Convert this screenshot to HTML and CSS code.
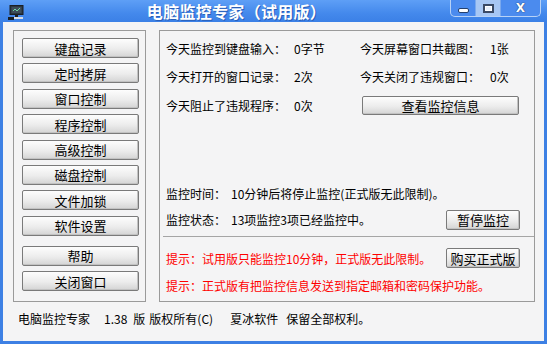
FILE: index.html
```html
<!DOCTYPE html>
<html>
<head>
    <title>电脑监控专家（试用版）</title>
    <link rel="stylesheet" href="styles.css">
</head>
<body>
    <div class="window">
        <div class="titlebar">
            <svg class="app-icon" width="16" height="15" viewBox="0 0 16 15">
                <rect x="2" y="0.5" width="13" height="9" fill="#2b3640" stroke="#1a1f24"/>
                <rect x="3.5" y="2" width="10" height="6" fill="#3d4d5a"/>
                <path d="M5 6 L7 4 L9 6 L12 3" stroke="#6fd3a0" stroke-width="1" fill="none"/>
                <rect x="7" y="10" width="3" height="2" fill="#1a1f24"/>
                <rect x="0" y="12" width="6" height="3" fill="#1a1f24"/>
                <rect x="6" y="12" width="9" height="2" fill="#d8dde4"/>
            </svg>
            <div class="title">电脑监控专家（试用版）</div>
            <div class="caption-buttons">
                <div class="cap-btn cap-min"><span class="min-bar"></span></div>
                <div class="cap-btn cap-max"><span class="max-box"></span></div>
                <div class="cap-btn cap-close">X</div>
            </div>
        </div>

        <div class="client">
            <div class="main">
                <div class="nav-panel">
                    <button class="btn nav-btn">键盘记录</button>
                    <button class="btn nav-btn">定时拷屏</button>
                    <button class="btn nav-btn">窗口控制</button>
                    <button class="btn nav-btn">程序控制</button>
                    <button class="btn nav-btn">高级控制</button>
                    <button class="btn nav-btn">磁盘控制</button>
                    <button class="btn nav-btn">文件加锁</button>
                    <button class="btn nav-btn">软件设置</button>
                    <button class="btn nav-btn nav-help">帮助</button>
                    <button class="btn nav-btn">关闭窗口</button>
                </div>

                <div class="info-panel">
                    <div class="stats">
                        <span>今天监控到键盘输入：</span><span>0字节</span>
                        <span>今天屏幕窗口共截图：</span><span>1张</span>
                        <span>今天打开的窗口记录：</span><span>2次</span>
                        <span>今天关闭了违规窗口：</span><span>0次</span>
                        <span>今天阻止了违规程序：</span><span>0次</span>
                        <button class="btn view-btn">查看监控信息</button>
                    </div>

                    <div class="status-row first">
                        <span class="status-label">监控时间：</span>
                        <span>10分钟后将停止监控(正式版无此限制)。</span>
                    </div>
                    <div class="status-row">
                        <span class="status-label">监控状态：</span>
                        <span class="grow">13项监控3项已经监控中。</span>
                        <button class="btn side-btn">暂停监控</button>
                    </div>

                    <div class="separator"></div>

                    <div class="status-row notice">
                        <span class="grow">提示：试用版只能监控10分钟，正式版无此限制。</span>
                        <button class="btn side-btn">购买正式版</button>
                    </div>
                    <div class="status-row notice">
                        <span>提示：正式版有把监控信息发送到指定邮箱和密码保护功能。</span>
                    </div>
                </div>
            </div>

            <div class="footer">
                <span class="f-name">电脑监控专家</span>
                <span class="f-ver">1.38</span>
                <span class="f-ban">版</span>
                <span class="f-copy">版权所有(C)</span>
                <span class="f-corp">夏冰软件</span>
                <span class="f-rights">保留全部权利。</span>
            </div>
        </div>
    </div>
</body>
</html>
```

FILE: styles.css
```css
body {
    margin: 0;
    font-family: "Noto Sans CJK SC", "Liberation Sans", sans-serif;
    font-size: 12px;
    color: #000;
}

.window {
    width: 547px;
    height: 344px;
    box-sizing: border-box;
    background: #3d80e4;
    display: flex;
    flex-direction: column;
}

.titlebar {
    height: 22px;
    display: flex;
    align-items: center;
    position: relative;
    background: linear-gradient(#5e9ff6, #4489ec 60%, #3b80e6);
}

.app-icon {
    margin-left: 8px;
    margin-top: 2px;
}

.title {
    flex: 1;
    text-align: center;
    margin-right: 98px;
    color: #fff;
    font-size: 16px;
    font-weight: bold;
    letter-spacing: 0.3px;
    text-shadow: 1px 1px 0 #2a5fb8;
}

.caption-buttons {
    position: absolute;
    top: 0;
    left: 450px;
    width: 91px;
    height: 17px;
    display: flex;
    border: 1px solid #b7d2f7;
    border-top: none;
    border-radius: 0 0 5px 5px;
    box-sizing: border-box;
    overflow: hidden;
    background: #4b8bee;
}

.cap-btn {
    display: flex;
    align-items: center;
    justify-content: center;
}

.cap-min {
    width: 24px;
    border-right: 1px solid #7aa9ee;
}

.cap-max {
    width: 24px;
    background: #a7c7f4;
    border-right: 1px solid #7aa9ee;
}

.cap-close {
    flex: 1;
    color: #fff;
    font-family: "DejaVu Sans", sans-serif;
    font-size: 12px;
    font-weight: bold;
    text-shadow: 0 0 1px #203a66, 0 0 1px #203a66;
}

.min-bar {
    width: 9px;
    height: 3px;
    margin-top: 5px;
    background: #fff;
    border: 1px solid #24406e;
    border-radius: 2px;
}

.max-box {
    width: 7px;
    height: 5px;
    border: 2px solid #3a4a66;
    background: #e8f0fc;
    box-shadow: inset 0 0 0 1px #fff;
}

.client {
    flex: 1;
    margin: 0 3px 3px 3px;
    background: #f4f4f5;
    display: flex;
    flex-direction: column;
}

.main {
    display: flex;
    gap: 13px;
    padding: 8px 0 0 10px;
}

.nav-panel {
    width: 133px;
    height: 272px;
    box-sizing: border-box;
    border: 1px solid #9a9a9a;
    padding: 7px 0 0 8px;
    display: flex;
    flex-direction: column;
    gap: 5.4px;
}

.btn {
    font-family: "Noto Sans CJK SC", sans-serif;
    font-size: 13px;
    line-height: 17px;
    color: #000;
    padding: 0;
    border: 1px solid #7a7a7a;
    border-radius: 2px;
    background: linear-gradient(#fdfdfd, #ececec 55%, #d4d4d4);
    box-shadow: inset -1px -1px 0 #c2c2c2;
}

.nav-btn {
    width: 117px;
    height: 20px;
}

.nav-help {
    margin-top: 4.6px;
}

.info-panel {
    width: 376px;
    height: 272px;
    box-sizing: border-box;
    border: 1px solid #9a9a9a;
    padding: 7px 14px 0 6px;
    display: flex;
    flex-direction: column;
}

.stats {
    display: grid;
    grid-template-columns: 128px 66px 130px auto;
    grid-auto-rows: 20px;
    row-gap: 8.7px;
    align-items: center;
}

.view-btn {
    grid-column: 3 / 5;
    width: 157px;
    height: 19px;
    margin-left: 2px;
}

.status-row {
    display: flex;
    align-items: center;
    height: 20px;
    margin-top: 6.8px;
}

.status-row.first {
    margin-top: 67.7px;
}

.status-label {
    width: 65px;
}

.grow {
    flex: 1;
}

.side-btn {
    width: 74px;
    height: 20px;
}

.separator {
    height: 1px;
    background: #a5a5a5;
    margin: 6.5px -14px 0 -3px;
}

.notice {
    color: #f00;
    margin-top: 11px;
}

.notice + .notice {
    margin-top: 7.5px;
}

.footer {
    margin-top: 7px;
    padding-left: 15px;
    height: 20px;
    line-height: 20px;
    display: flex;
}

.f-ver {
    margin-left: 14px;
}

.f-ban {
    margin-left: 6px;
}

.f-copy {
    margin-left: 4px;
}

.f-corp {
    margin-left: 17px;
}

.f-rights {
    margin-left: 8px;
}
```
